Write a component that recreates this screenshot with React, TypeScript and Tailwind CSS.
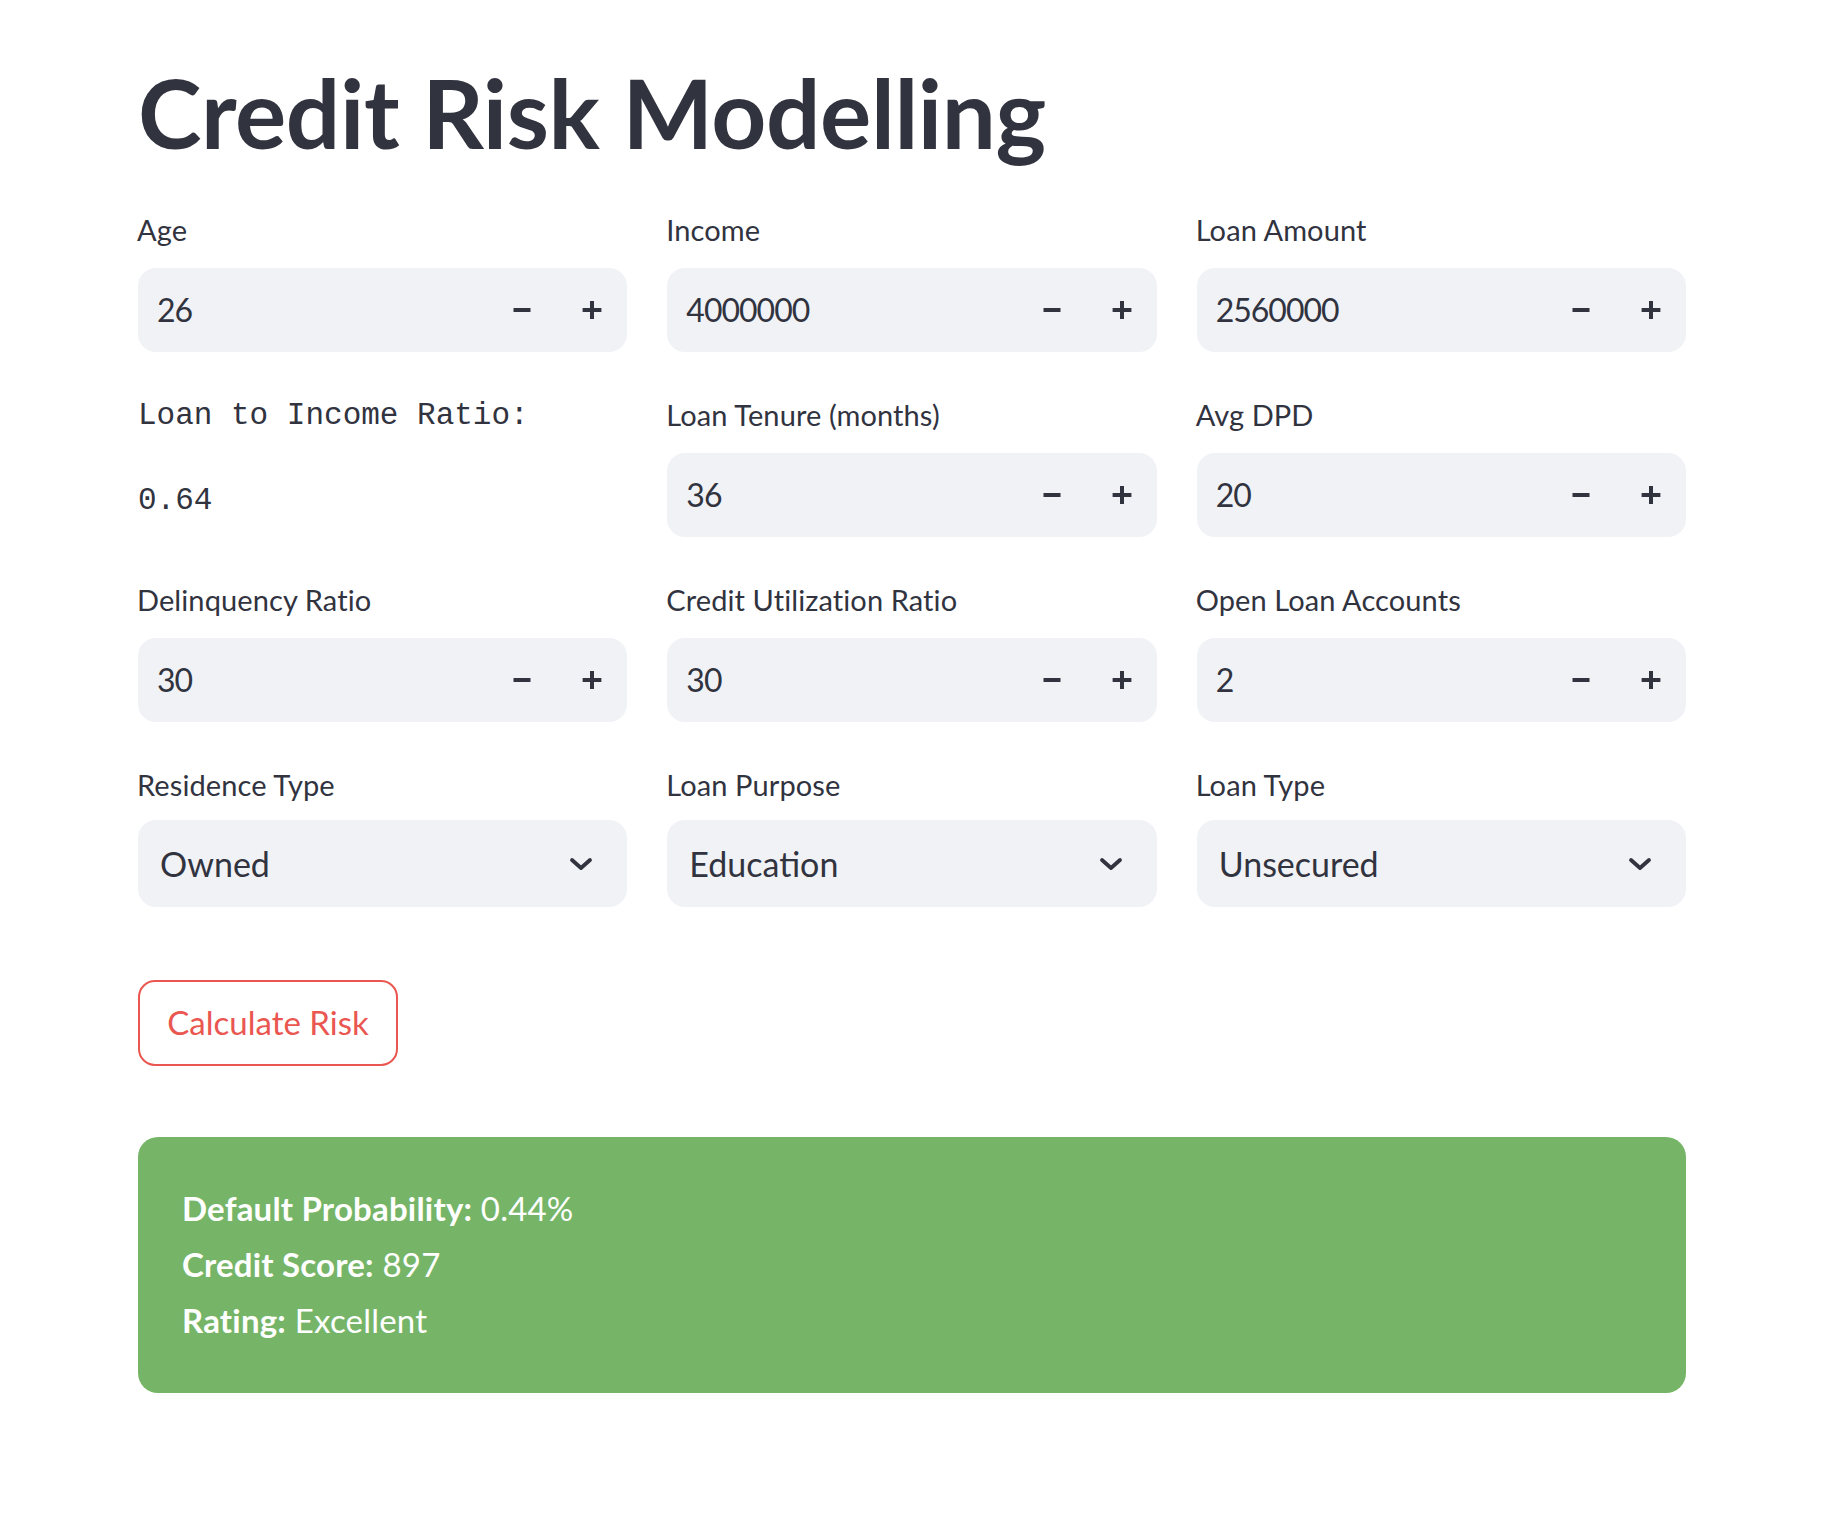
import React from "react";

const TEXT = "text-[#31333F]";

const MinusIcon = () => (
  <svg width="20" height="20" viewBox="0 0 20 20" aria-hidden="true">
    <line x1="1.5" y1="10" x2="18.5" y2="10" stroke="#31333F" strokeWidth="4" />
  </svg>
);

const PlusIcon = () => (
  <svg width="20" height="20" viewBox="0 0 20 20" aria-hidden="true">
    <line x1="0.6" y1="10" x2="19.4" y2="10" stroke="#31333F" strokeWidth="4" />
    <line x1="10" y1="1" x2="10" y2="19" stroke="#31333F" strokeWidth="4" />
  </svg>
);

const Chevron = () => (
  <svg width="24" height="14" viewBox="0 0 24 14" aria-hidden="true">
    <polyline
      points="3,3 12,11 21,3"
      fill="none"
      stroke="#31333F"
      strokeWidth="3.8"
      strokeLinecap="round"
      strokeLinejoin="round"
    />
  </svg>
);

function NumberField({ label, value }: { label: string; value: string }) {
  return (
    <div className="flex flex-col">
      <div className={`h-[34px] leading-[34px] text-[29px] tracking-[0.1px] -ml-[1px] mb-[21px] ${TEXT}`}>{label}</div>
      <div className="h-[84px] rounded-[18px] bg-[#F0F2F6] flex items-center">
        <span className={`flex-1 pl-[19px] text-[32px] tracking-[-1px] ${TEXT}`}>{value}</span>
        <div className="w-[70px] h-full flex items-center justify-center">
          <MinusIcon />
        </div>
        <div className="w-[70px] h-full flex items-center justify-center">
          <PlusIcon />
        </div>
      </div>
    </div>
  );
}

function SelectField({ label, value }: { label: string; value: string }) {
  return (
    <div className="flex flex-col">
      <div className={`h-[34px] leading-[34px] text-[29px] tracking-[0.1px] -ml-[1px] mb-[18px] ${TEXT}`}>{label}</div>
      <div className="h-[87px] rounded-[18px] bg-[#F0F2F6] flex items-center pl-[22px] pr-[34px]">
        <span className={`flex-1 text-[34px] ${TEXT}`}>{value}</span>
        <Chevron />
      </div>
    </div>
  );
}

export default function App() {
  return (
    <div className="min-h-screen w-full bg-white font-['Lato',sans-serif]">
      <div className="ml-[138px] w-[1548px] pb-[120px]">
        <h1 className={`pt-[54px] text-[96px] leading-[115px] font-bold tracking-[-0.4px] ${TEXT}`}>
          Credit Risk Modelling
        </h1>

        <div className="mt-[44px] grid grid-cols-3 gap-x-[40px] gap-y-[46px]">
          <NumberField label="Age" value="26" />
          <NumberField label="Income" value="4000000" />
          <NumberField label="Loan Amount" value="2560000" />

          <div className={`font-['Liberation_Mono',monospace] text-[31px] leading-[40px] ${TEXT}`}>
            <div className="-mt-[2px]">Loan to Income Ratio:</div>
            <div className="mt-[45px]">0.64</div>
          </div>
          <NumberField label="Loan Tenure (months)" value="36" />
          <NumberField label="Avg DPD" value="20" />

          <NumberField label="Delinquency Ratio" value="30" />
          <NumberField label="Credit Utilization Ratio" value="30" />
          <NumberField label="Open Loan Accounts" value="2" />

          <SelectField label="Residence Type" value="Owned" />
          <SelectField label="Loan Purpose" value="Education" />
          <SelectField label="Loan Type" value="Unsecured" />
        </div>

        <button
          type="button"
          className="mt-[73px] w-[260px] h-[86px] rounded-[17px] border-2 border-[#EA5650] bg-white text-[#EA5650] text-[33px] flex items-center justify-center"
        >
          Calculate Risk
        </button>

        <div className="mt-[71px] h-[256px] rounded-[20px] bg-[#76B568] pl-[44px] pt-[43px] text-white text-[33px] leading-[56px] tracking-[0.2px]">
          <div>
            <span className="font-bold">Default Probability:</span> 0.44%
          </div>
          <div>
            <span className="font-bold">Credit Score:</span> 897
          </div>
          <div>
            <span className="font-bold">Rating:</span> Excellent
          </div>
        </div>
      </div>
    </div>
  );
}
